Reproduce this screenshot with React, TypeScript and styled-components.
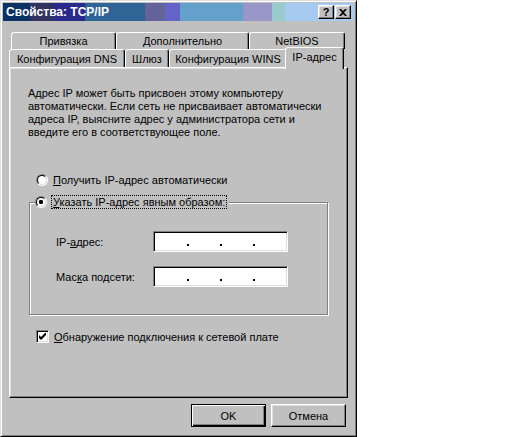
import React from 'react';
import styled, { createGlobalStyle } from 'styled-components';

const Global = createGlobalStyle`
  html, body { margin: 0; padding: 0; background: #ffffff; }
  body { font-family: "Liberation Sans", Arial, sans-serif; font-size: 11px; color: #000; }
  * { box-sizing: border-box; }
`;

const Win = styled.div`
  width: 357px;
  height: 437px;
  background: #c0c0c0;
  border: 1px solid;
  border-color: #dfdfdf #000 #000 #dfdfdf;
  box-shadow: inset 1px 1px #fff, inset -1px -1px #808080;
  padding: 2px;
  display: flex;
  flex-direction: column;
`;

const TitleBar = styled.div`
  height: 18px;
  display: flex;
  align-items: center;
  padding: 0 3px 0 3px;
  background: linear-gradient(
    to right,
    #0a3262 0 27px,
    #32325f 27px 50px,
    #2a2a8c 50px 82px,
    #2e6496 82px 142px,
    #64649a 142px 162px,
    #6464c8 162px 177px,
    #64a0cc 177px 240px,
    #9898c8 240px 269px,
    #98cccc 269px 282px,
    #a6caf0 282px
  );
`;

const Title = styled.div`
  flex: 1;
  color: #fff;
  font-weight: bold;
  font-size: 12px;
`;

const CapBtn = styled.div<{ $gap?: number }>`
  width: 16px;
  height: 14px;
  margin-left: ${p => p.$gap ?? 0}px;
  background: #c0c0c0;
  border: 1px solid;
  border-color: #fff #000 #000 #fff;
  box-shadow: inset -1px -1px #808080, inset 1px 1px #dfdfdf;
  display: flex;
  align-items: center;
  justify-content: center;
  font-weight: bold;
  font-size: 11px;
  line-height: 1;
`;

const Body = styled.div`
  padding: 11px 6px 0 6px;
  display: flex;
  flex-direction: column;
`;

const TabRow = styled.div<{ $h: number; $pl: number }>`
  height: ${p => p.$h}px;
  padding-left: ${p => p.$pl}px;
  display: flex;
  align-items: flex-end;
`;

const Tab = styled.div<{ $w: number; $active?: boolean }>`
  position: relative;
  width: ${p => p.$w}px;
  ${p =>
    p.$active
      ? 'height: 22px; margin: 0 -2px -2px -2px; padding-bottom: 3px; z-index: 2;'
      : 'align-self: stretch;'}
  background: #c0c0c0;
  border: 1px solid;
  border-bottom: none;
  border-color: #fff #000 transparent #fff;
  border-radius: 3px 3px 0 0;
  box-shadow: inset -1px 0 #808080;
  display: flex;
  align-items: center;
  justify-content: center;
  white-space: nowrap;
`;

const Panel = styled.div`
  position: relative;
  z-index: 1;
  width: 339px;
  height: 331px;
  background: #c0c0c0;
  border: 1px solid;
  border-color: #fff #000 #000 #fff;
  box-shadow: inset -1px -1px #808080, inset 1px 1px #dfdfdf;
  padding: 19px 0 0 18px;
  display: flex;
  flex-direction: column;
  align-items: flex-start;
`;

const Para = styled.p`
  margin: 0;
  line-height: 13px;
  width: 300px;
`;

const Choice = styled.label<{ $mt: number }>`
  margin: ${p => p.$mt}px 0 0 8px;
  height: 14px;
  display: flex;
  align-items: center;
  gap: 5px;
`;

const Radio = styled.span<{ $on?: boolean }>`
  width: 12px;
  height: 12px;
  border-radius: 50%;
  border: 1px solid;
  border-color: #808080 #fff #fff #808080;
  display: flex;
  flex: none;
  &::before {
    content: '';
    flex: 1;
    border-radius: 50%;
    border: 1px solid;
    border-color: #000 #dfdfdf #dfdfdf #000;
    background: ${p => (p.$on ? 'radial-gradient(circle, #000 0 2px, #fff 2.3px)' : '#fff')};
  }
`;

const U = styled.span`
  text-decoration: underline;
  text-underline-offset: 1px;
`;

const Group = styled.fieldset`
  margin: 8px 0 0 1px;
  width: 299px;
  padding: 22px 0 27px 5px;
  border: 1px solid #808080;
  box-shadow: inset 1px 1px #fff, 1px 1px #fff;
  min-inline-size: 0;
`;

const Legend = styled.legend`
  padding: 0 2px 0 0;
  height: 14px;
  display: flex;
  align-items: center;
  gap: 4px;
  background: #c0c0c0;
  position: relative;
  z-index: 1;
`;

const Focus = styled.span`
  border: 1px dotted #000;
  padding: 0 1px;
  line-height: 12px;
`;

const Fields = styled.div`
  margin-left: 21px;
  display: grid;
  grid-template-columns: 97px 135px;
  grid-auto-rows: 21px;
  row-gap: 14px;
  align-items: center;
`;

const IpBox = styled.div`
  height: 21px;
  background: #fff;
  border: 1px solid;
  border-color: #808080 #fff #fff #808080;
  box-shadow: inset 1px 1px #000, inset -1px -1px #dfdfdf;
  display: flex;
  align-items: flex-end;
  padding: 0 0 5px 2px;
`;

const Seg = styled.span`
  width: 30px;
`;

const Dot = styled.span`
  width: 2px;
  height: 2px;
  margin: 0 0.5px;
  background: #000;
`;

const Check = styled.label`
  margin: 15px 0 0 8px;
  display: flex;
  align-items: center;
  gap: 5px;
  height: 13px;
`;

const CheckBox = styled.span`
  width: 13px;
  height: 13px;
  background: #fff;
  border: 1px solid;
  border-color: #808080 #fff #fff #808080;
  box-shadow: inset 1px 1px #000, inset -1px -1px #dfdfdf;
  display: flex;
  align-items: center;
  justify-content: center;
  flex: none;
`;

const ButtonRow = styled.div`
  margin-top: 6px;
  padding-right: 2px;
  display: flex;
  justify-content: flex-end;
  gap: 5px;
`;

const Button = styled.button<{ $def?: boolean }>`
  width: 75px;
  height: 23px;
  padding: 0;
  font: inherit;
  color: #000;
  background: #c0c0c0;
  border: 1px solid;
  border-color: ${p => (p.$def ? '#000' : '#fff #000 #000 #fff')};
  box-shadow: ${p =>
    p.$def
      ? 'inset 1px 1px #fff, inset -1px -1px #000, inset -2px -2px #808080'
      : 'inset -1px -1px #808080, inset 1px 1px #dfdfdf'};
`;

const tabsBack = [
  { label: 'Привязка', w: 105 },
  { label: 'Дополнительно', w: 133 },
  { label: 'NetBIOS', w: 96 },
];

const tabsFront = [
  { label: 'Конфигурация DNS', w: 116 },
  { label: 'Шлюз', w: 44 },
  { label: 'Конфигурация WINS', w: 118 },
  { label: 'IP-адрес', w: 59, active: true },
];

const IpField = () => (
  <IpBox>
    <Seg />
    <Dot />
    <Seg />
    <Dot />
    <Seg />
    <Dot />
  </IpBox>
);

export default function App() {
  return (
    <>
      <Global />
      <Win>
        <TitleBar>
          <Title>Свойства: TCP/IP</Title>
          <CapBtn>?</CapBtn>
          <CapBtn $gap={1}>
            <svg width="8" height="7" viewBox="0 0 8 7">
              <path d="M0 0h2l2 2 2-2h2L5 3.5 8 7H6L4 5 2 7H0l3-3.5z" fill="#000" />
            </svg>
          </CapBtn>
        </TitleBar>
        <Body>
          <TabRow $h={17} $pl={2}>
            {tabsBack.map(t => (
              <Tab key={t.label} $w={t.w}>{t.label}</Tab>
            ))}
          </TabRow>
          <TabRow $h={18} $pl={0}>
            {tabsFront.map(t => (
              <Tab key={t.label} $w={t.w} $active={t.active}>{t.label}</Tab>
            ))}
          </TabRow>
          <Panel>
            <Para>
              Адрес IP может быть присвоен этому компьютеру автоматически. Если сеть не присваивает автоматически
              адреса IP, выясните адрес у администратора сети и введите его в соответствующее поле.
            </Para>
            <Choice $mt={34}>
              <Radio />
              <span><U>П</U>олучить IP-адрес автоматически</span>
            </Choice>
            <Group>
              <Legend>
                <Radio $on />
                <Focus><U>У</U>казать IP-адрес явным образом:</Focus>
              </Legend>
              <Fields>
                <span>IP-<U>а</U>дрес:</span>
                <IpField />
                <span>Мас<U>к</U>а подсети:</span>
                <IpField />
              </Fields>
            </Group>
            <Check>
              <CheckBox>
                <svg width="7" height="7" viewBox="0 0 7 7">
                  <path d="M0 2v3l2 2 5-5V-1L2 4z" fill="#000" />
                </svg>
              </CheckBox>
              <span><U>О</U>бнаружение подключения к сетевой плате</span>
            </Check>
          </Panel>
          <ButtonRow>
            <Button $def>OK</Button>
            <Button>Отмена</Button>
          </ButtonRow>
        </Body>
      </Win>
    </>
  );
}
